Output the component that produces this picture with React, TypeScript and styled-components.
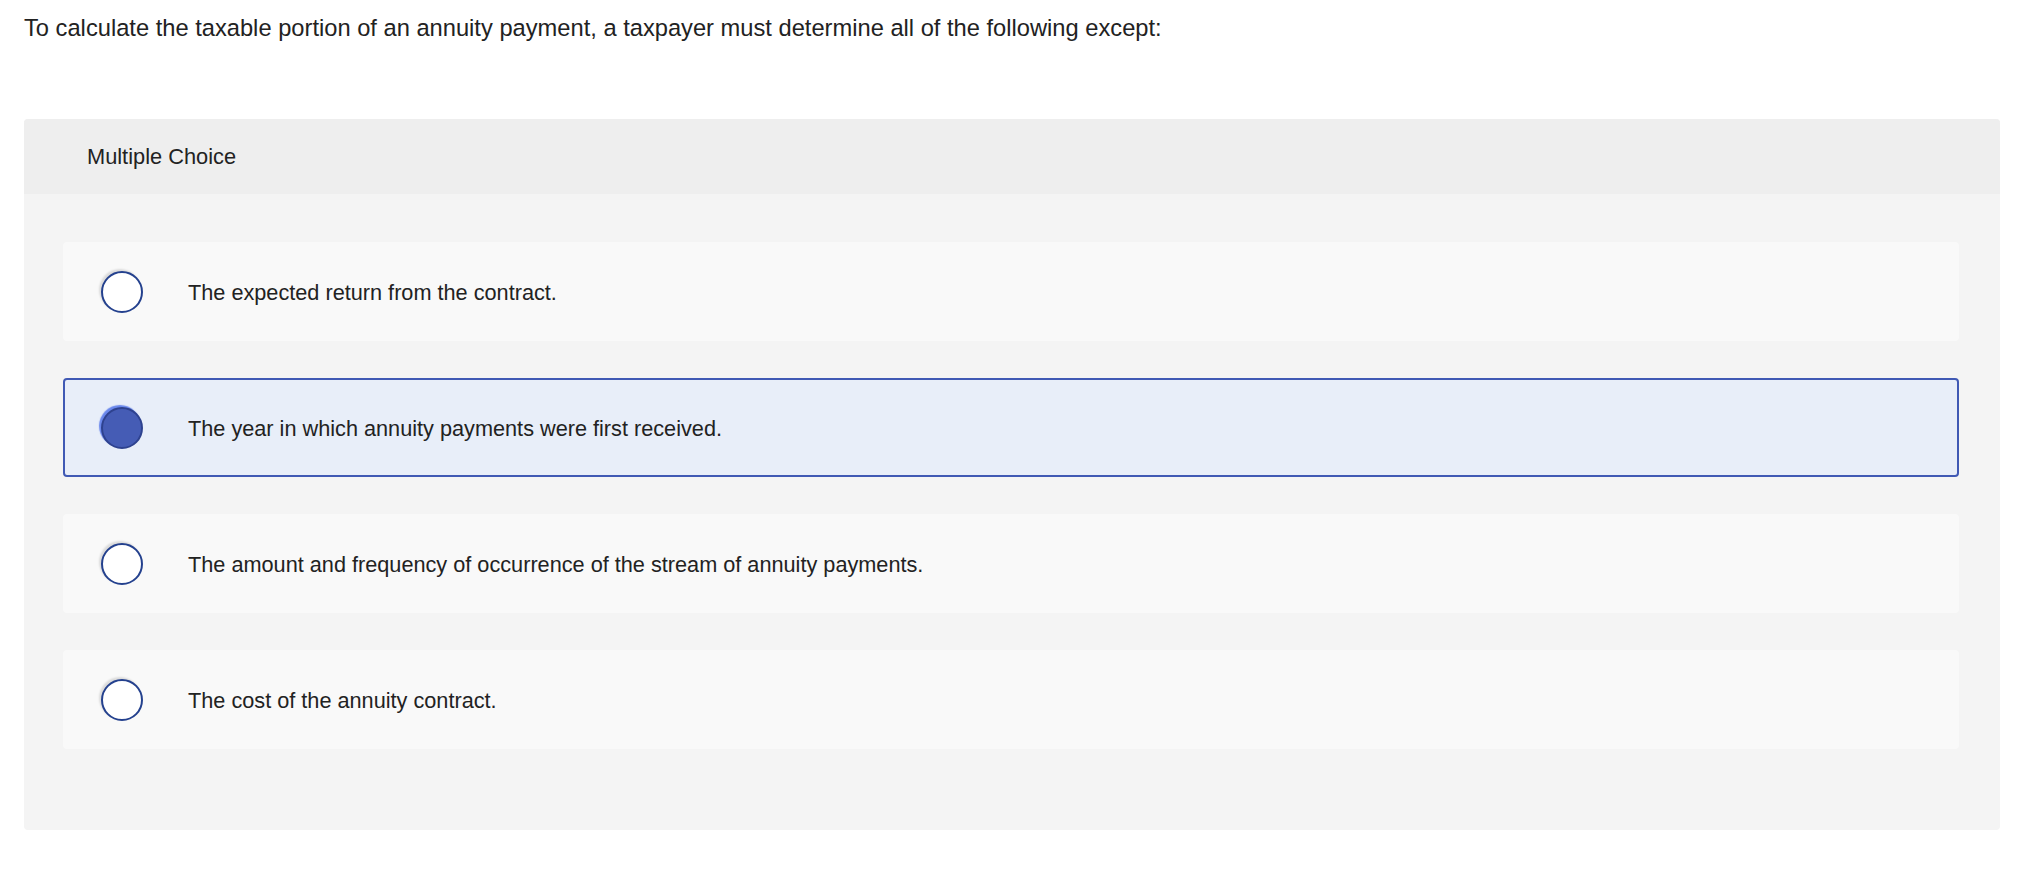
import React, { useState } from 'react';
import styled, { createGlobalStyle } from 'styled-components';

const GlobalStyle = createGlobalStyle`
  body {
    margin: 0;
    background: #fff;
    font-family: "Liberation Sans", Arial, sans-serif;
    color: #222;
  }
`;

const Page = styled.div`
  padding: 11px 40px 40px 24px;
`;

const Question = styled.p`
  margin: 0 0 74px;
  font-size: 23.7px;
  line-height: 34px;
  color: #222;
`;

const Panel = styled.section`
  background: #f4f4f4;
  border-radius: 4px;
  overflow: hidden;
`;

const PanelHeader = styled.div`
  height: 75px;
  display: flex;
  align-items: center;
  padding-left: 63px;
  background: #eeeeee;
  font-size: 21.8px;
  color: #222;
`;

const Options = styled.div`
  display: flex;
  flex-direction: column;
  gap: 37px;
  padding: 48px 41px 81px 39px;
`;

const Option = styled.label<{ $selected: boolean }>`
  box-sizing: border-box;
  height: 99px;
  display: flex;
  align-items: center;
  gap: 45px;
  padding-left: 36px;
  border-radius: 4px;
  border: 2px solid ${(p) => (p.$selected ? '#4059b4' : 'transparent')};
  background: ${(p) => (p.$selected ? '#e8eef9' : '#f9f9f9')};
  cursor: pointer;
`;

const Radio = styled.span<{ $selected: boolean }>`
  box-sizing: border-box;
  flex: none;
  width: 42px;
  height: 42px;
  border-radius: 50%;
  border: 2px solid ${(p) => (p.$selected ? '#2e428f' : '#24418e')};
  background: ${(p) => (p.$selected ? '#455cb5' : '#fff')};
  box-shadow: ${(p) =>
    p.$selected ? '-2px -2px 1px rgba(50, 90, 230, 0.7)' : '-2px -2px 2px rgba(0, 0, 0, 0.12)'};
`;

const OptionText = styled.span`
  padding-top: 2px;
  font-size: 21.7px;
  color: #222;
`;

const choices = [
  'The expected return from the contract.',
  'The year in which annuity payments were first received.',
  'The amount and frequency of occurrence of the stream of annuity payments.',
  'The cost of the annuity contract.',
];

const App: React.FC = () => {
  const [selected, setSelected] = useState(1);

  return (
    <Page>
      <GlobalStyle />
      <Question>
        To calculate the taxable portion of an annuity payment, a taxpayer must determine all of the following except:
      </Question>
      <Panel>
        <PanelHeader>Multiple Choice</PanelHeader>
        <Options>
          {choices.map((text, i) => (
            <Option key={i} $selected={selected === i} onClick={() => setSelected(i)}>
              <Radio $selected={selected === i} />
              <OptionText>{text}</OptionText>
            </Option>
          ))}
        </Options>
      </Panel>
    </Page>
  );
};

export default App;
